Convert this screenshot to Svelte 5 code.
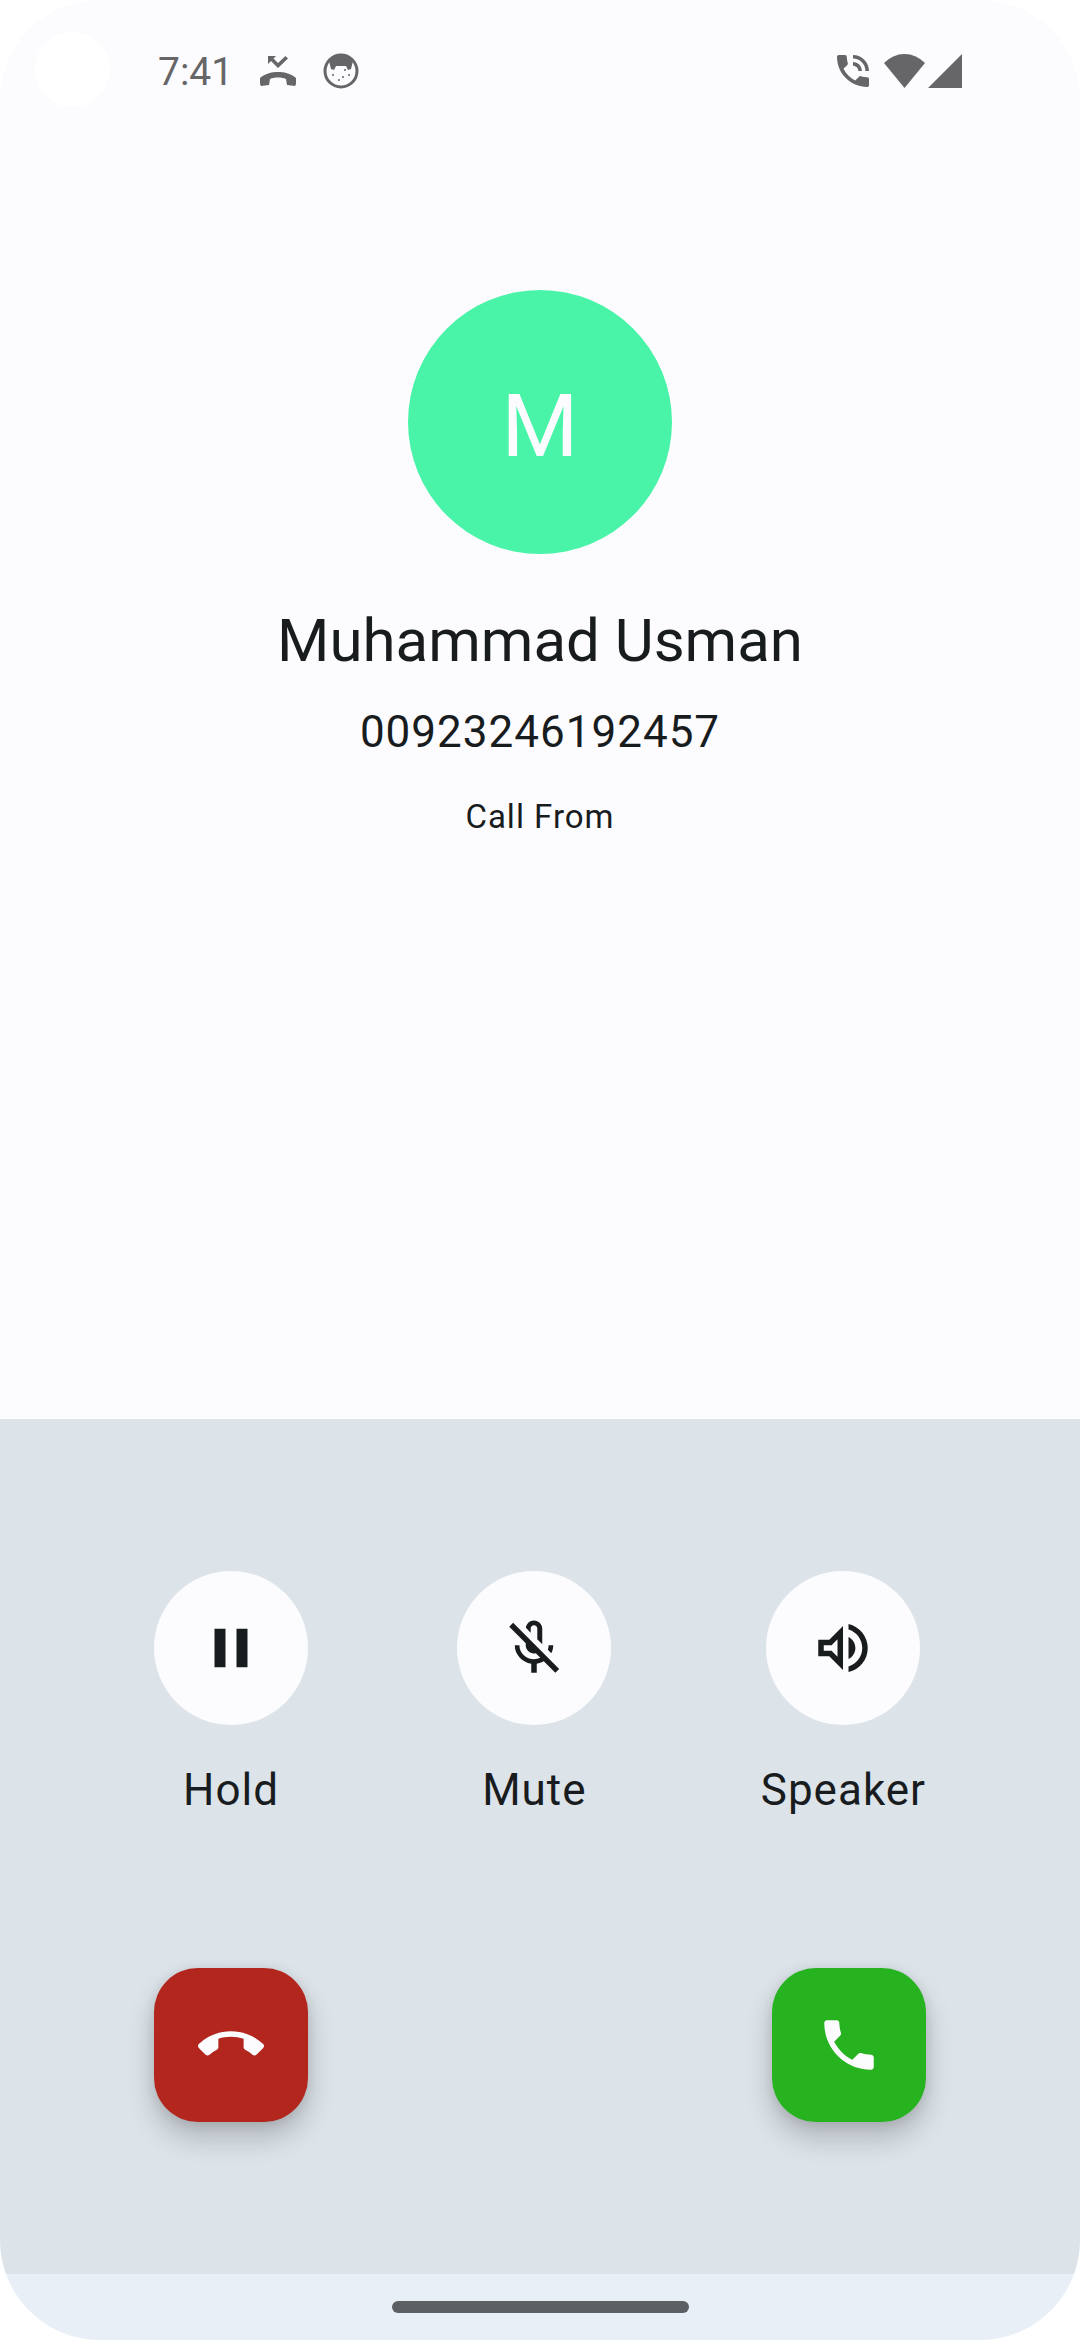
<script lang="ts">
let {
	name = "Muhammad Usman",
	number = "00923246192457",
	time = "7:41",
}: {
	name?: string;
	number?: string;
	time?: string;
} = $props();

const controls = [
	{
		label: "Hold",
		icon: "M6 19h4V5H6v14zm8-14v14h4V5h-4z",
	},
	{
		label: "Mute",
		icon: "M10.8 4.9c0-.66.54-1.2 1.2-1.2s1.2.54 1.2 1.2l-.01 3.91L15 10.6V5c0-1.66-1.34-3-3-3-1.54 0-2.79 1.16-2.96 2.65l1.76 1.76V4.9zM19 11h-1.7c0 .58-.1 1.13-.27 1.64l1.27 1.27c.44-.88.7-1.87.7-2.91zM4.41 2.86L3 4.27l6 6V11c0 1.66 1.34 3 3 3 .23 0 .44-.03.65-.08l1.66 1.66c-.71.33-1.5.52-2.31.52-2.76 0-5.3-2.1-5.3-5.1H5c0 3.41 2.72 6.23 6 6.72V21h2v-3.28c.91-.13 1.77-.45 2.55-.9l4.2 4.2 1.41-1.41L4.41 2.86z",
	},
	{
		label: "Speaker",
		icon: "M3 9v6h4l5 5V4L7 9H3zm7-.17v6.34L7.83 13H5v-2h2.83L10 8.83zM16.5 12c0-1.77-1.02-3.29-2.5-4.03v8.05c1.48-.73 2.5-2.25 2.5-4.02zM14 3.23v2.06c2.89.86 5 3.54 5 6.71s-2.11 5.85-5 6.71v2.06c4.01-.91 7-4.49 7-8.77s-2.99-7.86-7-8.77z",
	},
];

let active: Record<string, boolean> = $state({});
</script>

<div class="screen">
	<header class="status">
		<span class="camera"></span>
		<div class="status-group left">
			<time>{time}</time>
			<svg width="36" height="30" viewBox="0 0 36 30" aria-hidden="true">
				<path d="M0 22C6 17 12 16 18 16s12 1 18 6v6l-1 2-8-1-1-6c-4-2-12-2-16 0l-1 6-8 1-1-2z" />
				<path d="M8 0h8l-2.500 2.500 4.500 4.500 7.500-7 2.500 2.500-10 9.500-7-7L8 8z" />
			</svg>
			<svg width="36" height="36" viewBox="0 0 36 36" aria-hidden="true">
				<circle class="ring" cx="18" cy="18" r="16" />
				<path d="M6 8C11 0 25 0 30 8l-2 8-3 1-2-4H13l-2 4-3-1z" />
				<circle cx="10" cy="22" r="1" />
				<circle cx="22" cy="17" r="1" />
				<circle cx="26" cy="22" r="1" />
				<circle cx="20" cy="24" r="1" />
				<circle cx="16" cy="27" r="1" />
			</svg>
		</div>
		<div class="status-group right">
			<svg class="in-call" width="32" height="32" viewBox="3 3 18 18" aria-hidden="true">
				<path d="M20 15.500c-1.250 0-2.450-.2-3.570-.57-.35-.11-.74-.03-1.020.24l-2.200 2.200c-2.830-1.440-5.150-3.750-6.590-6.580l2.200-2.210c.28-.27.36-.66.25-1.010C8.700 6.450 8.500 5.250 8.500 4c0-.55-.45-1-1-1H4c-.55 0-1 .45-1 1 0 9.390 7.610 17 17 17 .55 0 1-.45 1-1v-3.500c0-.55-.45-1-1-1zM19 12h2c0-4.970-4.030-9-9-9v2c3.870 0 7 3.130 7 7zm-4 0h2c0-2.760-2.240-5-5-5v2c1.660 0 3 1.340 3 3z" />
			</svg>
			<svg width="41" height="34" viewBox="0 0 41 34" aria-hidden="true">
				<path d="M0 9A28 28 0 0 1 41 9L20.500 34z" />
			</svg>
			<svg width="34" height="34" viewBox="0 0 34 34" aria-hidden="true">
				<path d="M34 0v34H0z" />
			</svg>
		</div>
	</header>

	<main class="caller">
		<div class="avatar">{name[0]}</div>
		<h1>{name}</h1>
		<p class="number">{number}</p>
		<p class="source">Call From</p>
	</main>

	<section class="panel">
		<div class="row">
			{#each controls as { label, icon } (label)}
				<div class="control">
					<button
						class="round"
						aria-labelledby="label-{label}"
						aria-pressed={!!active[label]}
						onclick={() => (active[label] = !active[label])}
					>
						<svg width="66" height="66" viewBox="0 0 24 24"><path d={icon} /></svg>
					</button>
					<span class="label" id="label-{label}">{label}</span>
				</div>
			{/each}
		</div>
		<div class="row">
			<button class="fab decline" aria-label="Decline">
				<svg width="66" height="66" viewBox="0 0 24 24">
					<path d="M12 9c-1.600 0-3.150.25-4.600.72v3.100c0 .39-.23.74-.56.9-.98.49-1.870 1.120-2.660 1.850-.18.18-.43.28-.7.28-.28 0-.53-.11-.71-.29L.29 13.080c-.18-.17-.29-.42-.29-.7 0-.28.11-.53.29-.71C3.340 8.780 7.460 7 12 7s8.660 1.780 11.710 4.670c.18.18.29.43.29.71 0 .28-.11.53-.29.71l-2.480 2.480c-.18.18-.43.29-.71.29-.27 0-.52-.11-.7-.28-.79-.74-1.690-1.360-2.670-1.850-.33-.16-.56-.5-.56-.9v-3.100C15.150 9.250 13.600 9 12 9z" />
				</svg>
			</button>
			<button class="fab answer" aria-label="Answer">
				<svg width="66" height="66" viewBox="0 0 24 24">
					<path d="M6.620 10.790c1.440 2.830 3.760 5.140 6.590 6.590l2.200-2.200c.27-.27.67-.36 1.020-.24 1.120.37 2.330.57 3.570.57.55 0 1 .45 1 1V20c0 .55-.45 1-1 1-9.390 0-17-7.610-17-17 0-.55.45-1 1-1h3.500c.55 0 1 .45 1 1 0 1.250.2 2.450.57 3.570.11.35.03.74-.25 1.020l-2.200 2.200z" />
				</svg>
			</button>
		</div>
	</section>

	<footer class="nav"><span class="handle"></span></footer>
</div>

<style>
:global(body) {
	margin: 0;
	background: #fff;
}

.screen {
	position: relative;
	display: flex;
	flex-direction: column;
	min-height: 100vh;
	border-radius: 100px;
	overflow: hidden;
	background: #fcfcff;
	color: #191c1e;
	font-family: Roboto, sans-serif;
}

svg {
	display: block;
	fill: currentColor;
}

button {
	display: flex;
	align-items: center;
	justify-content: center;
	width: 154px;
	height: 154px;
	border: none;
	padding: 0;
	color: inherit;
	cursor: pointer;
}

.status {
	display: flex;
	align-items: center;
	justify-content: space-between;
	height: 142px;
	padding: 0 118px 0 158px;
	color: #666669;
}

.camera {
	position: absolute;
	top: 32px;
	left: 35px;
	width: 75px;
	height: 75px;
	border-radius: 50%;
	background: #fff;
}

.status-group {
	display: flex;
	align-items: center;
}

.left {
	gap: 27px;
}

.right {
	gap: 3px;
}

.in-call {
	margin-right: 12px;
}

.ring {
	fill: none;
	stroke: currentColor;
	stroke-width: 3;
}

time {
	padding-top: 2px;
	font-size: 39px;
	line-height: 44px;
}

.caller {
	display: flex;
	flex: 1;
	flex-direction: column;
	align-items: center;
	padding-top: 148px;
	text-align: center;
}

.avatar {
	box-sizing: border-box;
	display: flex;
	align-items: center;
	justify-content: center;
	width: 264px;
	height: 264px;
	padding-top: 6px;
	border-radius: 50%;
	background: #49f4a9;
	color: #fcfcff;
	font-size: 88px;
}

h1 {
	margin: 48px 0 20px;
	font-size: 60px;
	font-weight: 400;
	line-height: 77px;
}

p {
	margin: 0;
}

.number,
.label {
	font-size: 44px;
	line-height: 66px;
	letter-spacing: 1px;
}

.source {
	margin-top: 30px;
	font-size: 33px;
	line-height: 44px;
	letter-spacing: 1px;
}

.panel {
	display: flex;
	flex-direction: column;
	gap: 145px;
	padding: 152px 154px;
	background: #dce3e9;
}

.row {
	display: flex;
	justify-content: space-between;
}

.control {
	display: flex;
	flex-direction: column;
	align-items: center;
	gap: 32px;
}

.round {
	border-radius: 50%;
	background: #fcfcff;
}

.fab {
	border-radius: 44px;
	color: #fcfcff;
	box-shadow: 0 16px 28px rgba(0, 0, 0, .2), 0 2px 12px rgba(0, 0, 0, .1);
}

.decline {
	background: #b3261e;
}

.answer {
	background: #27b31f;
}

.nav {
	display: flex;
	align-items: center;
	justify-content: center;
	height: 66px;
	background: #e8eff6;
}

.handle {
	width: 297px;
	height: 12px;
	border-radius: 6px;
	background: #5d6063;
}
</style>
